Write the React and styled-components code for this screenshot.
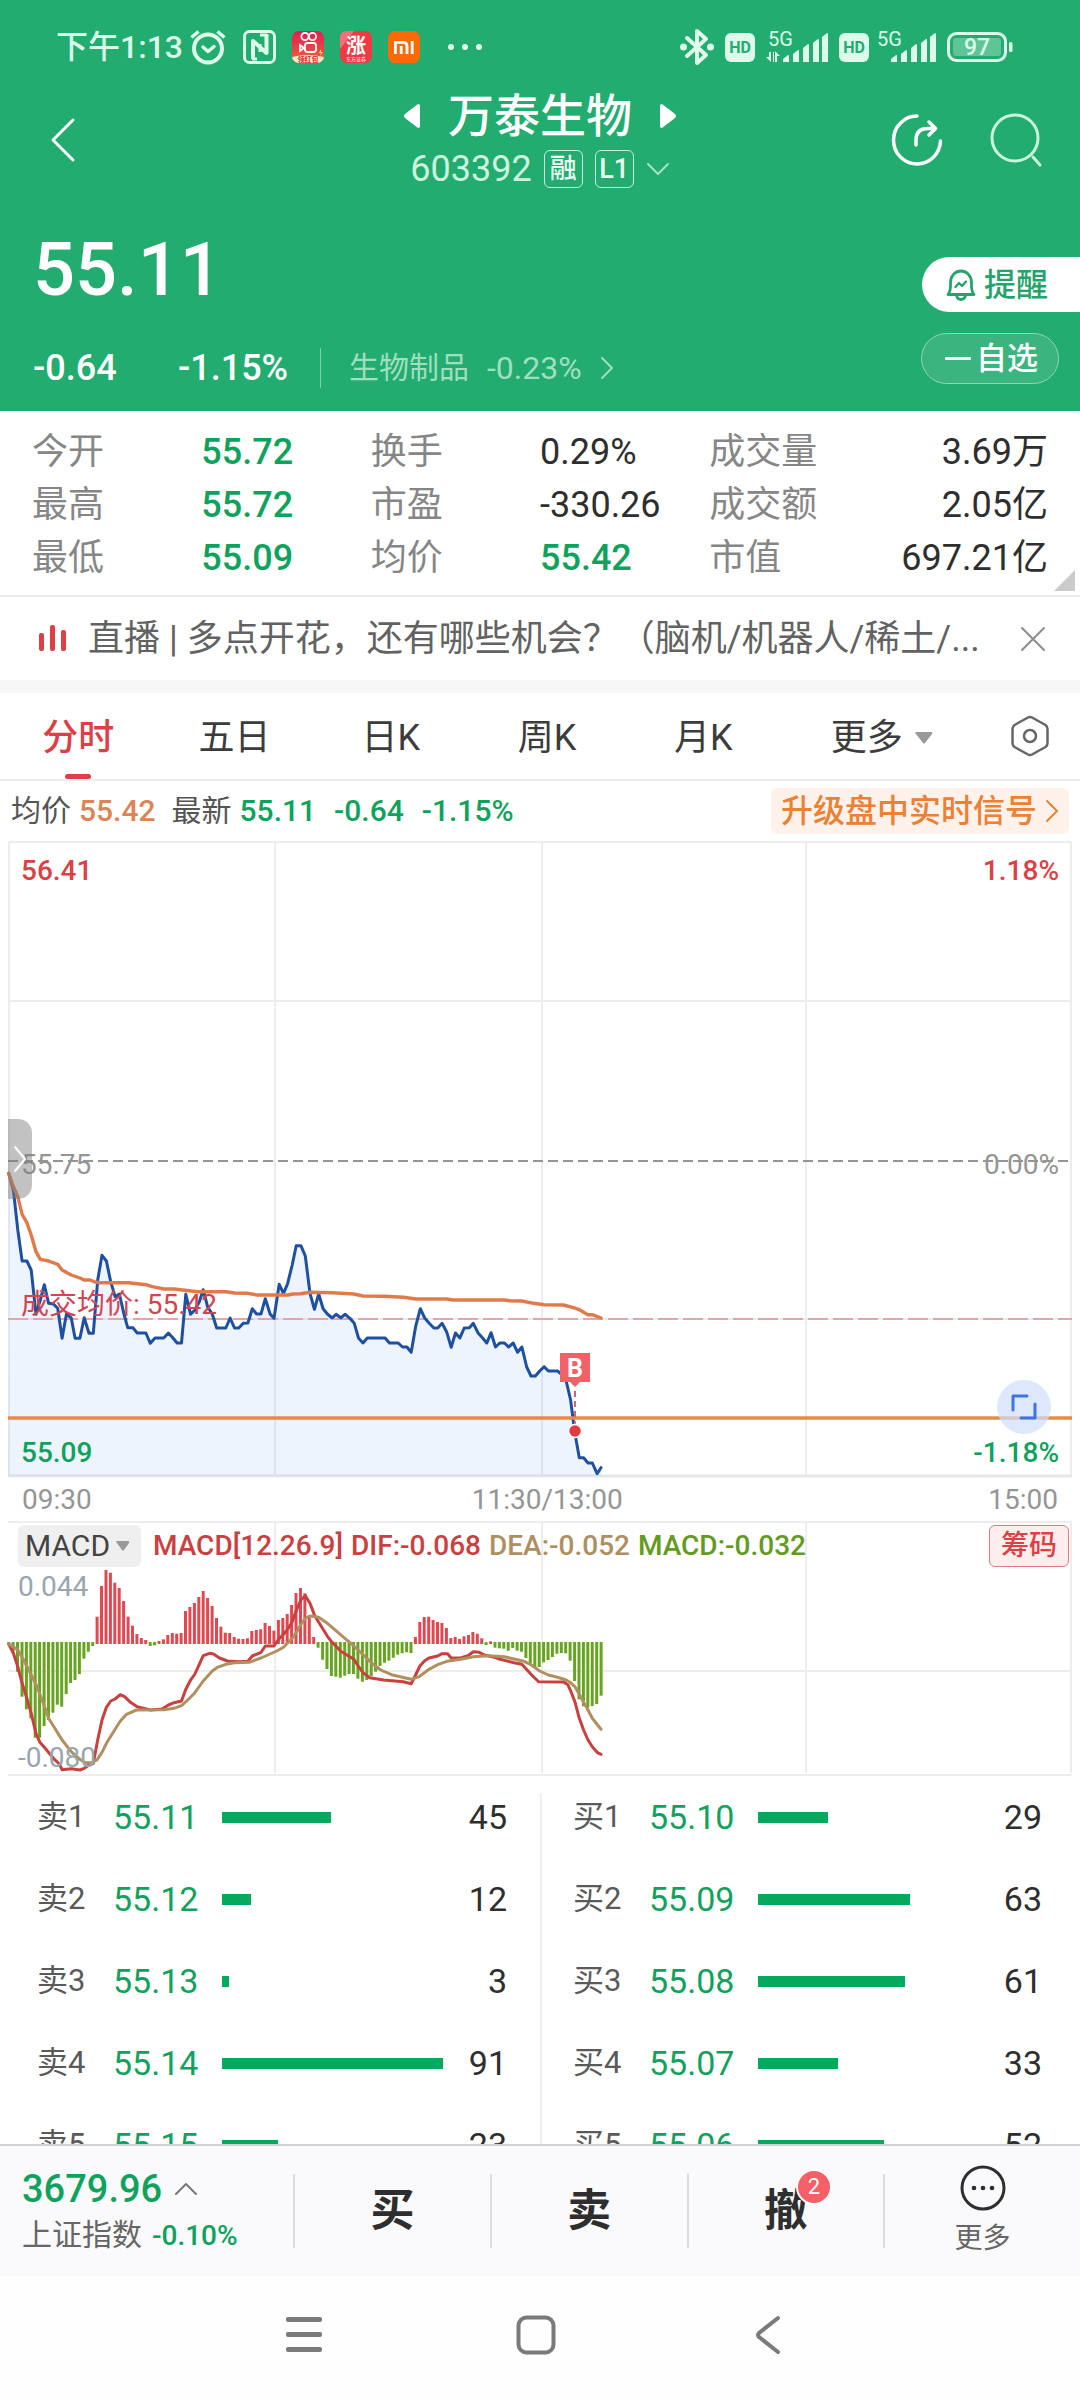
import React from "react";
import styled, { createGlobalStyle, css } from "styled-components";

const green = "#0fa25d";
const red = "#dc3f46";
const brand = "#22ac6f";

const GlobalStyle = createGlobalStyle`
  * { box-sizing: border-box; }
  body {
    margin: 0;
    background: #fff;
    color: #2e2e2e;
    font-family: Roboto, "Noto Sans CJK SC", sans-serif;
    font-size: 36px;
  }
  button, select {
    margin: 0;
    padding: 0;
    border: 0;
    background: none;
    color: inherit;
    font: inherit;
    cursor: pointer;
  }
  svg { display: block; flex: none; overflow: visible; }
`;

const Screen = styled.div`
  display: flex;
  flex-direction: column;
  height: 100vh;
`;

const Scroll = styled.main`
  flex: 1;
  min-height: 0;
  overflow-y: auto;
  scrollbar-width: none;
`;

/* ---------- header ---------- */

const Header = styled.header`
  background: ${brand};
  color: #fff;
  padding-bottom: 23px;
`;

const StatusBar = styled.div`
  display: flex;
  align-items: center;
  justify-content: space-between;
  height: 90px;
  padding: 4px 67px 0 56px;
  color: #dcfbea;
`;

const StatusGroup = styled.div`
  display: flex;
  align-items: center;
  gap: ${(p) => p.$gap}px;
`;

const Clock = styled.span`
  font-size: 32px;
  line-height: 40px;
  font-weight: 500;
`;

const TitleBar = styled.div`
  display: grid;
  grid-template-columns: 1fr auto 1fr;
  align-items: center;
  padding: 0 38px;
`;

const IconButton = styled.button`
  display: flex;
  align-items: center;
  justify-content: center;
`;

const TitleStart = styled.div`
  padding-left: 12px;
`;

const TitleCenter = styled.div`
  display: flex;
  flex-direction: column;
  align-items: center;
  gap: 7px;
`;

const TitleLine = styled.div`
  display: flex;
  align-items: center;
  gap: 28px;
`;

const StockName = styled.h1`
  margin: 0;
  font-size: 46px;
  line-height: 52px;
  font-weight: 500;
`;

const CodeLine = styled.div`
  display: flex;
  align-items: center;
  gap: 12px;
  height: 40px;
  color: #cdf3df;
  font-size: 36px;
  line-height: 40px;
`;

const CodeTag = styled.span`
  display: flex;
  align-items: center;
  justify-content: center;
  width: 39px;
  height: 38px;
  border: 1px solid #c5f0da;
  border-radius: 6px;
  color: #e9fdf3;
  font-size: 27px;
  line-height: 36px;
  font-weight: 500;
`;

const HeaderActions = styled.div`
  display: flex;
  align-items: center;
  justify-content: flex-end;
  gap: 48px;
`;

const Summary = styled.section`
  display: flex;
  justify-content: space-between;
  padding: 41px 0 0 33px;
`;

const Price = styled.div`
  font-size: 74px;
  line-height: 80px;
  font-weight: 500;
`;

const ChangeRow = styled.div`
  display: flex;
  align-items: center;
  height: 40px;
  margin-top: 38px;
  font-weight: 500;
  line-height: 40px;
`;

const Change = styled.span`
  width: ${(p) => p.$width}px;
`;

const SectorLink = styled.a`
  display: flex;
  align-items: center;
  gap: 18px;
  padding-left: 28px;
  border-left: 1px solid #7fd0a8;
  color: #9fdfc0;
  font-size: 30px;
  font-weight: 400;
  text-decoration: none;
`;

const SectorChange = styled.span`
  font-size: 32px;
`;

const SideActions = styled.div`
  display: flex;
  flex-direction: column;
  align-items: flex-end;
  gap: 21px;
  padding-top: 27px;
`;

const AlertButton = styled.button`
  display: flex;
  align-items: center;
  gap: 8px;
  height: 55px;
  padding: 0 32px 0 24px;
  border-radius: 28px 0 0 28px;
  background: #fff;
  color: #24a36b;
  font-size: 32px;
  line-height: 40px;
  font-weight: 500;
`;

const WatchButton = styled.button`
  display: flex;
  align-items: center;
  gap: 5px;
  height: 51px;
  margin-right: 21px;
  padding: 0 20px 0 23px;
  border: 1px solid #8fd6b4;
  border-radius: 26px;
  background: #3bb47f;
  font-size: 31px;
  line-height: 40px;
  font-weight: 500;
`;

/* ---------- key figures ---------- */

const StatsWrap = styled.section`
  position: relative;
  border-bottom: 2px solid #ededed;
`;

const Stats = styled.dl`
  display: grid;
  grid-template-columns: repeat(6, 1fr);
  margin: 0;
  padding: 15px 32px 10px;
  line-height: 53px;
`;

const StatLabel = styled.dt`
  color: #868686;
`;

const StatValue = styled.dd`
  margin: 0;
  color: ${(p) => (p.$down ? green : "#2e2e2e")};
  font-weight: ${(p) => (p.$down ? 500 : 400)};
  text-align: ${(p) => (p.$end ? "right" : "left")};
  white-space: nowrap;
`;

const Corner = styled.svg`
  position: absolute;
  right: 5px;
  bottom: 4px;
`;

const Notice = styled.section`
  display: flex;
  align-items: center;
  height: 83px;
  padding: 0 34px 0 39px;
  color: #626262;
`;

const NoticeText = styled.span`
  flex: 1;
  margin: 0 40px 0 22px;
  overflow: hidden;
  white-space: nowrap;
  text-overflow: ellipsis;
  line-height: 48px;
`;

/* ---------- period tabs ---------- */

const Tabs = styled.nav`
  display: flex;
  height: 101px;
  border-top: 13px solid #f7f7f7;
  border-bottom: 2px solid #ececec;
  padding-right: 31px;
`;

const Tab = styled.button`
  position: relative;
  display: flex;
  align-items: center;
  justify-content: center;
  gap: 12px;
  flex: ${(p) => (p.$wide ? 200 : 156)} 1 0;
  padding-top: 3px;
  color: ${(p) => (p.$active ? red : "#3c3c3c")};
  font-weight: ${(p) => (p.$active ? 500 : 400)};
  line-height: 48px;
  ${(p) =>
    p.$active &&
    css`
      &::after {
        content: "";
        position: absolute;
        left: calc(50% - 13px);
        bottom: 0;
        width: 26px;
        height: 5px;
        border-radius: 3px;
        background: ${red};
      }
    `}
`;

const TabTools = styled.div`
  display: flex;
  align-items: center;
  justify-content: flex-end;
  width: 67px;
`;

/* ---------- charts ---------- */

const QuoteLine = styled.div`
  display: flex;
  align-items: center;
  height: 60px;
  padding: 0 11px;
  color: #555;
  font-size: 30px;
  line-height: 44px;
  white-space: nowrap;
`;

const QuoteValue = styled.span`
  margin-left: ${(p) => (p.$spaced ? 18 : 8)}px;
  margin-right: ${(p) => (p.$last ? 16 : 0)}px;
  color: ${(p) => (p.$average ? "#dc8455" : green)};
  font-weight: 500;
`;

const Promo = styled.a`
  display: flex;
  align-items: center;
  gap: 8px;
  height: 46px;
  margin-left: auto;
  padding: 0 10px;
  border-radius: 6px;
  background: #fef2eb;
  color: #ec8033;
  font-size: 32px;
  font-weight: 500;
  text-decoration: none;
`;

const ChartBox = styled.section`
  position: relative;
  margin: 0 8px;
`;

const ChartSvg = styled.svg`
  width: 100%;
  height: auto;
`;

const ChartLabel = styled.span`
  position: absolute;
  ${(p) => p.$side || "left"}: ${(p) => (p.$tight ? 10 : 13)}px;
  ${(p) => (p.$bottom ? `bottom: ${p.$bottom};` : `top: ${p.$top};`)}
  ${(p) => p.$middle && "transform: translateY(-50%);"}
  color: ${(p) => p.$color};
  font-size: 28px;
  line-height: 32px;
  font-weight: ${(p) => (p.$strong ? 500 : 400)};
`;

const DrawerHandle = styled.button`
  position: absolute;
  left: 0;
  top: 50%;
  display: flex;
  align-items: center;
  justify-content: center;
  width: 24px;
  height: 80px;
  transform: translateY(-50%);
  border-radius: 0 14px 14px 0;
  background: rgba(120, 120, 120, 0.45);
`;

const ExpandButton = styled.button`
  position: absolute;
  right: 21px;
  top: 89%;
  display: flex;
  align-items: center;
  justify-content: center;
  width: 54px;
  height: 54px;
  transform: translateY(-50%);
  border-radius: 50%;
  background: rgba(208, 223, 252, 0.72);
`;

const TimeAxis = styled.div`
  display: grid;
  grid-template-columns: 31fr auto 30fr;
  height: 44px;
  padding: 0 14px;
  color: #959595;
  font-size: 28px;
  line-height: 46px;

  & > :last-child { text-align: right; }
`;

const IndicatorBar = styled.div`
  position: absolute;
  left: 10px;
  right: 3px;
  top: 4px;
  display: flex;
  align-items: center;
  gap: 8px;
  font-size: 28px;
  line-height: 40px;
  font-weight: 500;
  white-space: nowrap;
`;

const SelectBox = styled.label`
  position: relative;
  display: flex;
  align-items: center;
  height: 42px;
  margin-right: 4px;
  border-radius: 6px;
  background: #efefef;
  color: #444;
  font-size: 30px;
  font-weight: 400;

  select {
    width: 123px;
    padding-left: 7px;
    appearance: none;
  }

  svg {
    position: absolute;
    right: 11px;
    pointer-events: none;
  }
`;

const Legend = styled.span`
  color: ${(p) => p.$color};
`;

const ChipButton = styled.button`
  height: 42px;
  margin-left: auto;
  padding: 0 11px;
  border: 1px solid #e07a7f;
  border-radius: 6px;
  background: #fdeeee;
  color: ${red};
`;

/* ---------- order book ---------- */

const Book = styled.section`
  display: grid;
  grid-template-columns: 1fr 1fr;
`;

const Side = styled.div`
  margin-top: 17px;
  padding: 0 ${(p) => (p.$buy ? 38 : 33)}px 0 ${(p) => (p.$buy ? 31 : 37)}px;
  border-left: ${(p) => (p.$buy ? "2px solid #f0f0f0" : "0")};
`;

const BookTable = styled.table`
  width: 100%;
  table-layout: fixed;
  border-collapse: collapse;
  margin-top: -17px;
  font-size: 34px;
  line-height: 40px;
`;

const BookRow = styled.tr`
  height: 82px;
`;

const Level = styled.th`
  width: 76px;
  padding: 0;
  color: #5a5a5a;
  font-size: 31px;
  font-weight: 400;
  text-align: left;
`;

const Quote = styled.td`
  width: 109px;
  padding: 0;
  color: ${green};
`;

const Track = styled.td`
  padding: 0;
`;

const VolumeBar = styled.div`
  height: 11px;
  background: #05a95d;
`;

const Volume = styled.td`
  width: 64px;
  padding: 0;
  text-align: right;
`;

/* ---------- bottom bars ---------- */

const TradeBar = styled.footer`
  display: flex;
  align-items: center;
  height: 132px;
  border-top: 2px solid #d3d3d5;
  background: #fafafc;
`;

const IndexBox = styled.button`
  width: 293px;
  padding-left: 22px;
  text-align: left;
  color: #666;
  font-size: 30px;
  line-height: 40px;
`;

const IndexValue = styled.span`
  display: flex;
  align-items: center;
  gap: 12px;
  margin-bottom: 4px;
  color: ${green};
  font-size: 38px;
  line-height: 44px;
  font-weight: 500;
`;

const IndexChange = styled.span`
  margin-left: 10px;
  color: ${green};
  font-size: 28px;
  font-weight: 500;
`;

const TradeButton = styled.button`
  flex: 1;
  display: flex;
  flex-direction: column;
  align-items: center;
  justify-content: center;
  gap: 10px;
  height: 74px;
  border-left: 2px solid #dcdcde;
  font-size: ${(p) => (p.$small ? 28 : 44)}px;
  line-height: ${(p) => (p.$small ? 36 : 56)}px;
  font-weight: ${(p) => (p.$small ? 400 : 700)};
  color: ${(p) => (p.$small ? "#666" : "#2e2e2e")};
`;

const Badged = styled.span`
  position: relative;
`;

const Badge = styled.span`
  position: absolute;
  left: 32px;
  top: -14px;
  width: 36px;
  height: 36px;
  border: 2px solid #fff;
  border-radius: 50%;
  background: #f65f67;
  color: #fff;
  font-size: 22px;
  line-height: 32px;
  font-weight: 400;
  text-align: center;
`;

const SystemNav = styled.nav`
  display: grid;
  grid-template-columns: repeat(3, 1fr);
  height: 124px;
  padding: 0 196px 6px 188px;
  background: #fefefe;
`;

/* ---------- icons ---------- */

const stroke = { fill: "none", strokeLinecap: "round", strokeLinejoin: "round" };

const Chevron = ({ w, h, dir = "right", color = "currentColor", sw = 2 }) => {
  const d = {
    right: `M${sw} ${sw}L${w - sw} ${h / 2}L${sw} ${h - sw}`,
    left: `M${w - sw} ${sw}L${sw} ${h / 2}L${w - sw} ${h - sw}`,
    down: `M${sw} ${sw}L${w / 2} ${h - sw}L${w - sw} ${sw}`,
    up: `M${sw} ${h - sw}L${w / 2} ${sw}L${w - sw} ${h - sw}`,
  }[dir];
  return (
    <svg width={w} height={h} {...stroke} stroke={color} strokeWidth={sw}>
      <path d={d} />
    </svg>
  );
};

const Caret = ({ w, h, color = "#999" }) => (
  <svg width={w} height={h}>
    <path d={`M0 1Q0 0 2 0H${w - 2}Q${w} 0 ${w - 1} 2L${w / 2 + 1} ${h - 1}Q${w / 2} ${h} ${w / 2 - 1} ${h - 1}L1 2Z`} fill={color} />
  </svg>
);

const TitleArrow = ({ right }) => (
  <svg width="16" height="24" viewBox="0 0 16 24" fill="#fff">
    <path d={right ? "M0 2Q0 0 2 0L15 10Q17 12 15 14L2 24Q0 24 0 22Z" : "M16 2Q16 0 14 0L1 10Q-1 12 1 14L14 24Q16 24 16 22Z"} />
  </svg>
);

const AlarmIcon = () => (
  <svg width="38" height="36" viewBox="0 0 38 36" {...stroke} stroke="#dcfbea" strokeWidth="4">
    <circle cx="19" cy="19.5" r="14" />
    <path d="M14 18L19 22.500L25 17.500" strokeWidth="3.500" />
    <path d="M2.500 8.500L9.500 2.500M35.500 8.500L28.500 2.500" strokeWidth="3.500" strokeLinecap="butt" />
  </svg>
);

const NfcIcon = () => (
  <svg width="33" height="34" viewBox="0 0 33 34" fill="none" stroke="#dcfbea" strokeWidth="3" strokeLinejoin="round">
    <rect x="1.500" y="1.500" width="30" height="31" rx="5" />
    <path d="M10 29V11L23.500 23V4" strokeWidth="4" />
    <path d="M9 29H14M17 5H24" />
    <path d="M17 14V22" />
  </svg>
);

const VideoAppIcon = () => (
  <svg width="32" height="32" viewBox="0 0 32 32">
    <defs>
      <linearGradient id="videoApp" x1="0" y1="0" x2="0" y2="1">
        <stop offset="0" stopColor="#dc1f52" />
        <stop offset="1" stopColor="#f7603a" />
      </linearGradient>
      <clipPath id="videoClip"><rect width="32" height="32" rx="7" /></clipPath>
    </defs>
    <g clipPath="url(#videoClip)">
      <rect width="32" height="32" fill="url(#videoApp)" />
      <path d="M0 26Q16 22 32 26V32H0Z" fill="#fbe9c4" />
      <g fill="none" stroke="#fff" strokeWidth="1.800">
        <circle cx="13" cy="5.500" r="3.600" />
        <circle cx="20.500" cy="5.500" r="3.600" />
        <rect x="13" y="12" width="11" height="9" rx="2.500" />
        <path d="M12 17L8 14V20Z" />
      </g>
      <path d="M29 18L27 22H29L28 25L31 21H29Z" fill="#ffd84d" />
      <text x="16" y="31" fontSize="7" fontWeight="700" textAnchor="middle" fill="#d2262b">领红包</text>
    </g>
  </svg>
);

const RiseAppIcon = () => (
  <svg width="32" height="32" viewBox="0 0 32 32">
    <rect width="32" height="32" rx="7" fill="#ee3a45" />
    <path d="M0 7Q0 0 7 0H14L0 18Z" fill="#f47079" />
    <text x="16" y="22" fontSize="20" fontWeight="700" textAnchor="middle" fill="#fff">涨</text>
    <text x="16" y="30" fontSize="5" textAnchor="middle" fill="#fff">东方证券</text>
  </svg>
);

const MiIcon = () => (
  <svg width="32" height="32" viewBox="0 0 32 32">
    <rect width="32" height="32" rx="7" fill="#fb6a04" />
    <g fill="none" stroke="#fff" strokeWidth="2.800">
      <path d="M7.400 23V11.400H15Q19 11.400 19 15V23" />
      <path d="M13.200 15V23M24.200 10V23" />
    </g>
  </svg>
);

const DotsIcon = () => (
  <svg width="46" height="8" fill="#dcfbea">
    <circle cx="15" cy="4" r="3" /><circle cx="29" cy="4" r="3" /><circle cx="43" cy="4" r="3" />
  </svg>
);

const BluetoothIcon = () => (
  <svg width="34" height="38" viewBox="0 0 34 38" {...stroke} stroke="#dcfbea" strokeWidth="4">
    <path d="M7 10L26 27L17 35V3L26 11L7 28" />
    <circle cx="3.500" cy="19" r="1.500" fill="#dcfbea" /><circle cx="30.500" cy="19" r="1.500" fill="#dcfbea" />
  </svg>
);

const HdIcon = () => (
  <svg width="30" height="29" viewBox="0 0 30 29">
    <rect width="30" height="29" rx="6" fill="#dcfbea" />
    <text x="15" y="20" fontSize="16" fontWeight="700" textAnchor="middle" fill={brand}>HD</text>
  </svg>
);

const SignalIcon = ({ data }) => (
  <svg width={data ? 62 : 56} height="32" viewBox={data ? "0 0 62 32" : "6 0 56 32"} fill="#dcfbea">
    <text x={data ? 2 : 3} y="15" fontSize="20">5G</text>
    {data && <path d="M0 26L5 31V21H3V26ZM7 21V31H8V21ZM14 25L9 20V31H11V25Z" />}
    {[[17, 7], [27, 12], [37, 18], [47, 23], [56, 29]].map(([x, h]) => (
      <path key={x} d={`M${x} ${35 - h}L${x + 5} ${31 - h}Q${x + 6} ${31 - h} ${x + 6} ${32 - h}V31H${x}Z`} />
    ))}
  </svg>
);

const BatteryIcon = () => (
  <svg width="66" height="30" viewBox="0 0 66 30">
    <rect x="1.500" y="1.500" width="57" height="27" rx="8" fill="none" stroke="#dcfbea" strokeWidth="3" />
    <rect x="6" y="6" width="48" height="18" rx="3" fill="#5dc596" />
    <rect x="62" y="10" width="3.500" height="10" rx="1.500" fill="#dcfbea" />
    <text x="30" y="23" fontSize="23" fontWeight="500" textAnchor="middle" fill="#dcfbea">97</text>
  </svg>
);

const ShareIcon = () => (
  <svg width="50" height="52" viewBox="0 0 50 52" {...stroke} stroke="#fff" strokeWidth="3.500">
    <path d="M25 2A23.500 24 0 1 0 48.500 27" />
    <path d="M24 31V26Q24 14.500 36 14.500H43" />
    <path d="M37 8L43.500 14.500L37 21" />
  </svg>
);

const SearchIcon = () => (
  <svg width="52" height="56" viewBox="0 0 52 56" {...stroke} stroke="#c9f6dd" strokeWidth="3">
    <circle cx="25" cy="26" r="23" />
    <path d="M43 45L50 53" />
  </svg>
);

const BellIcon = () => (
  <svg width="30" height="32" viewBox="0 0 30 32" {...stroke} stroke="#24a36b" strokeWidth="2.800">
    <path d="M2 25.500H28C25 22 25.500 19 25.500 14C25.500 7 21 2 15 2S4.500 7 4.500 14C4.500 19 5 22 2 25.500Z" />
    <path d="M10.500 26C11 29.500 13 30.500 15 30.500S19 29.500 19.500 26" />
    <path d="M9.500 18L13 14L16 17L20 12.500" strokeWidth="2.300" />
  </svg>
);

const LiveIcon = () => (
  <svg width="27" height="27" viewBox="0 0 27 27" fill={red}>
    <rect x="0" y="8" width="5" height="18" rx="2" />
    <rect x="11" y="0" width="5" height="26" rx="2" />
    <rect x="22" y="5" width="5" height="21" rx="2" />
  </svg>
);

const CloseIcon = () => (
  <svg width="26" height="26" viewBox="0 0 26 26" {...stroke} stroke="#8c8c8c" strokeWidth="2">
    <path d="M2 2L24 24M24 2L2 24" />
  </svg>
);

const HexIcon = () => (
  <svg width="38" height="42" viewBox="0 0 38 42" {...stroke} stroke="#666" strokeWidth="2.500">
    <path d="M17 2.500Q19 1.500 21 2.500L34.500 10Q36.500 11.500 36.500 14V28Q36.500 30.500 34.500 32L21 39.500Q19 40.500 17 39.500L3.500 32Q1.500 30.500 1.500 28V14Q1.500 11.500 3.500 10Z" />
    <circle cx="19" cy="21" r="6" />
  </svg>
);

const ExpandIcon = () => (
  <svg width="26" height="26" viewBox="0 0 26 26" {...stroke} stroke="#3f74de" strokeWidth="3">
    <path d="M2 16V2H16M24 10V24H10" />
  </svg>
);

const MoreIcon = () => (
  <svg width="46" height="46" viewBox="0 0 46 46">
    <circle cx="23" cy="23" r="21" fill="none" stroke="#2e2e2e" strokeWidth="3" />
    <g fill="#2e2e2e"><circle cx="14" cy="23" r="2.300" /><circle cx="23" cy="23" r="2.300" /><circle cx="32" cy="23" r="2.300" /></g>
  </svg>
);

/* ---------- data ---------- */

const priceTrace = [
  [22,280],[34,330],[45,450],[56,543],[68,543],[79,570],[91,703],[102,660],[112,614],[123,670],[135,672],[146,685],[157,775],[168,703],[180,713],[190,775],[202,775],[213,713],[225,760],[236,760],[247,600],[258,526],[269,543],[280,605],[291,650],[302,642],[313,700],[323,743],[336,743],[347,759],[369,759],[380,790],[392,774],[414,774],[426,759],[437,773],[448,789],[459,789],[470,643],[482,703],[493,690],[504,665],[514,629],[525,680],[537,703],[548,744],[571,744],[582,714],[593,744],[604,744],[615,730],[627,729],[638,686],[649,702],[660,702],[671,656],[683,702],[693,715],[706,613],[717,640],[727,612],[739,555],[749,497],[761,497],[772,528],[784,640],[795,688],[806,642],[817,686],[828,702],[840,714],[850,703],[862,713],[873,703],[885,715],[896,730],[907,775],[918,789],[929,774],[974,774],[985,789],[1007,789],[1018,801],[1029,801],[1040,817],[1051,740],[1063,686],[1074,714],[1085,729],[1097,744],[1107,744],[1118,730],[1130,757],[1141,802],[1152,759],[1163,774],[1174,744],[1187,743],[1197,730],[1209,759],[1220,773],[1231,789],[1242,758],[1253,801],[1264,789],[1276,789],[1286,801],[1298,789],[1309,817],[1320,801],[1332,861],[1343,888],[1354,888],[1365,873],[1376,860],[1387,873],[1410,873],[1421,884],[1432,903],[1443,960],[1454,1060],[1465,1133],[1476,1133],[1487,1149],[1498,1149],[1510,1181],[1520,1163],
];

const averageTrace = [
  [22,280],[34,320],[45,350],[56,403],[68,428],[79,465],[91,515],[102,538],[123,543],[146,553],[157,570],[180,585],[202,594],[213,600],[228,600],[240,606],[252,608],[325,608],[369,614],[385,620],[415,627],[440,627],[500,635],[571,635],[593,639],[625,640],[650,645],[728,645],[740,642],[760,641],[784,637],[840,638],[895,642],[918,648],[970,649],[1020,652],[1052,657],[1130,657],[1145,660],[1276,660],[1290,662],[1320,663],[1350,670],[1376,674],[1425,675],[1450,683],[1465,689],[1487,704],[1498,704],[1520,714],
];

const macdBars = [
  430,455,515,590,628,655,713,713,678,660,638,614,620,582,549,540,522,476,455,438,
  350,258,210,218,248,264,303,350,377,402,414,420,438,436,
  423,418,405,399,401,399,333,321,309,291,273,294,318,354,380,398,399,411,416,417,415,393,390,388,369,378,392,360,354,342,315,279,264,280,346,411,
  443,479,507,528,530,533,527,522,522,536,545,540,528,515,498,488,482,473,464,460,457,459,
  411,366,351,350,360,366,369,384,414,411,417,409,405,396,401,415,435,424,
  443,445,446,452,444,452,455,474,490,504,501,487,480,471,461,459,460,482,543,598,619,623,618,612,587,
];

const difTrace = [
  [22,432],[34,460],[45,500],[56,550],[68,595],[79,640],[91,700],[101,727],[112,742],[135,775],[150,792],[157,809],[180,806],[202,810],[213,805],[225,795],[236,790],[247,720],[258,660],[269,622],[280,603],[291,597],[304,584],[315,590],[330,607],[347,620],[380,630],[410,627],[426,615],[440,608],[459,603],[470,568],[482,540],[493,522],[504,493],[514,467],[530,460],[540,462],[555,474],[575,483],[604,485],[627,484],[638,468],[660,457],[671,438],[693,438],[706,416],[717,403],[728,387],[739,365],[749,332],[761,300],[772,287],[784,310],[795,345],[806,367],[817,388],[828,409],[840,427],[862,454],[895,478],[907,500],[918,518],[935,533],[970,540],[1020,545],[1040,551],[1051,525],[1062,498],[1074,482],[1085,474],[1107,468],[1118,461],[1132,461],[1141,474],[1165,474],[1185,466],[1197,455],[1212,457],[1225,465],[1245,470],[1260,476],[1300,488],[1320,493],[1343,523],[1362,545],[1425,546],[1436,554],[1443,572],[1454,605],[1465,655],[1476,690],[1487,720],[1498,740],[1510,757],[1520,763],
];

const deaTrace = [
  [22,432],[45,450],[60,480],[79,525],[91,553],[112,618],[123,655],[135,678],[157,720],[180,755],[202,778],[215,788],[232,788],[245,780],[258,757],[269,730],[291,688],[304,664],[320,643],[345,630],[415,629],[440,625],[459,617],[475,600],[493,578],[514,543],[537,513],[548,503],[571,493],[593,488],[630,487],[660,474],[700,453],[717,442],[739,415],[749,398],[761,373],[772,355],[784,348],[806,352],[828,370],[873,416],[895,438],[918,464],[940,490],[963,510],[990,524],[1040,538],[1060,530],[1085,508],[1107,494],[1130,484],[1165,478],[1197,470],[1235,467],[1275,470],[1325,484],[1343,494],[1365,513],[1387,525],[1410,532],[1432,540],[1443,548],[1454,560],[1465,583],[1476,607],[1487,630],[1498,655],[1520,688],
];

// The traces are sampled on a grid finer than the plot: 2.529 units across and 3 units down per plot unit.
const toX = (x) => x / 2.529 - 8;
const toPoints = (trace, top) => trace.map(([x, y]) => `${toX(x).toFixed(1)},${(y / 3 + top).toFixed(1)}`).join(" ");

const stats = [
  ["今开", "55.72", true], ["换手", "0.29%"], ["成交量", "3.69万"],
  ["最高", "55.72", true], ["市盈", "-330.26"], ["成交额", "2.05亿"],
  ["最低", "55.09", true], ["均价", "55.42", true], ["市值", "697.21亿"],
];

const sells = [["卖1", "55.11", 45], ["卖2", "55.12", 12], ["卖3", "55.13", 3], ["卖4", "55.14", 91], ["卖5", "55.15", 23]];
const buys = [["买1", "55.10", 29], ["买2", "55.09", 63], ["买3", "55.08", 61], ["买4", "55.07", 33], ["买5", "55.06", 52]];
const maxVolume = 91;

/* ---------- sections ---------- */

const grid = "#ededef";

const PriceChart = () => {
  const line = toPoints(priceTrace, 239);
  return (
    <ChartSvg viewBox="0 0 1064 636" role="img" aria-label="分时走势">
      <g stroke={grid} strokeWidth="2">
        <path d="M0 1H1064M0 160H1064M0 478H1064M267 0V636M534 0V636M798 0V636M1 0V636M1063 0V636" />
        <path d="M0 635H1064" stroke="#e6e7ea" strokeWidth="3" />
      </g>
      <polygon points={`0,635 ${line} 593,635`} fill="#3f7be8" fillOpacity="0.085" />
      <path d="M0 320H1064" stroke="#959595" strokeWidth="2" strokeDasharray="10 5" />
      <path d="M0 478H1064" stroke="#e3a5aa" strokeWidth="2" strokeDasharray="20 5" />
      <polyline points={line} {...stroke} stroke="#1e50a2" strokeWidth="3" />
      <polyline points={toPoints(averageTrace, 239)} {...stroke} stroke="#e07b49" strokeWidth="3.400" />
      <path d="M0 577H1064" stroke="#e88a48" strokeWidth="3.400" />
      <path d="M567 550V584" stroke="#dd6070" strokeWidth="2" strokeDasharray="6 4" />
      <path d="M552 512H582V541H572L567 546L562 541H552Z" fill="#f2606a" />
      <text x="567" y="536" fontSize="25" fontWeight="700" textAnchor="middle" fill="#fff">B</text>
      <circle cx="567" cy="590" r="6.500" fill="#e53942" stroke="#fff" strokeWidth="1.500" />
    </ChartSvg>
  );
};

const MacdChart = () => (
  <ChartSvg viewBox="0 0 1064 255" role="img" aria-label="MACD">
    <path d="M0 1H1064M0 150H1064M0 254H1064M267 0V252M534 0V252M798 0V252M1063 0V252" stroke={grid} strokeWidth="2" />
    {macdBars.map((v, i) => {
      const x = toX(22 + i * 11.18);
      const up = v < 430;
      return (
        <path
          key={i}
          d={`M${x.toFixed(1)} ${up ? 123 : 121}V${(v / 3 - 21).toFixed(1)}`}
          stroke={up ? "#e2484f" : "#67a521"}
          strokeWidth="3"
        />
      );
    })}
    <polyline points={toPoints(difTrace, -21)} {...stroke} stroke="#c9403f" strokeWidth="3" />
    <polyline points={toPoints(deaTrace, -21)} {...stroke} stroke="#b0905f" strokeWidth="3" />
  </ChartSvg>
);

const BookSide = ({ rows, buy }) => (
  <Side $buy={buy}>
    <BookTable aria-label={buy ? "买盘" : "卖盘"}>
      <tbody>
        {rows.map(([level, quote, volume]) => (
          <BookRow key={level}>
            <Level scope="row">{level}</Level>
            <Quote>{quote}</Quote>
            <Track>
              <VolumeBar style={{ width: `${(volume / maxVolume) * 100}%` }} />
            </Track>
            <Volume>{volume}</Volume>
          </BookRow>
        ))}
      </tbody>
    </BookTable>
  </Side>
);

export default function App() {
  return (
    <Screen>
      <GlobalStyle />
      <Scroll>
        <Header>
          <StatusBar>
            <StatusGroup $gap={16}>
              <StatusGroup $gap={6}>
                <Clock>下午1:13</Clock>
                <AlarmIcon />
              </StatusGroup>
              <NfcIcon />
              <VideoAppIcon />
              <RiseAppIcon />
              <MiIcon />
              <DotsIcon />
            </StatusGroup>
            <StatusGroup $gap={11}>
              <BluetoothIcon />
              <HdIcon />
              <SignalIcon data />
              <HdIcon />
              <SignalIcon />
              <BatteryIcon />
            </StatusGroup>
          </StatusBar>

          <TitleBar>
            <TitleStart>
              <IconButton aria-label="返回"><Chevron w={26} h={46} dir="left" sw={3} /></IconButton>
            </TitleStart>
            <TitleCenter>
              <TitleLine>
                <IconButton aria-label="上一只"><TitleArrow /></IconButton>
                <StockName>万泰生物</StockName>
                <IconButton aria-label="下一只"><TitleArrow right /></IconButton>
              </TitleLine>
              <CodeLine>
                603392
                <CodeTag>融</CodeTag>
                <CodeTag>L1</CodeTag>
                <IconButton aria-label="展开"><Chevron w={24} h={14} dir="down" sw={2} color="#a5e3c4" /></IconButton>
              </CodeLine>
            </TitleCenter>
            <HeaderActions>
              <IconButton aria-label="分享"><ShareIcon /></IconButton>
              <IconButton aria-label="搜索"><SearchIcon /></IconButton>
            </HeaderActions>
          </TitleBar>

          <Summary>
            <div>
              <Price>55.11</Price>
              <ChangeRow>
                <Change $width={145}>-0.64</Change>
                <Change $width={142}>-1.15%</Change>
                <SectorLink href="#sector">
                  <span>生物制品</span>
                  <SectorChange>-0.23%</SectorChange>
                  <Chevron w={14} h={24} />
                </SectorLink>
              </ChangeRow>
            </div>
            <SideActions>
              <AlertButton><BellIcon />提醒</AlertButton>
              <WatchButton>
                <svg width="26" height="3"><rect width="26" height="3" rx="1" fill="#fff" /></svg>
                自选
              </WatchButton>
            </SideActions>
          </Summary>
        </Header>

        <StatsWrap>
          <Stats>
            {stats.map(([label, value, down], i) => (
              <React.Fragment key={label}>
                <StatLabel>{label}</StatLabel>
                <StatValue $down={down} $end={i % 3 === 2}>{value}</StatValue>
              </React.Fragment>
            ))}
          </Stats>
          <Corner width="21" height="21"><path d="M21 0V21H0Z" fill="#cbcbcb" /></Corner>
        </StatsWrap>

        <Notice>
          <LiveIcon />
          <NoticeText>直播 | 多点开花，还有哪些机会？（脑机/机器人/稀土/...</NoticeText>
          <IconButton aria-label="关闭"><CloseIcon /></IconButton>
        </Notice>

        <Tabs>
          <Tab $active>分时</Tab>
          <Tab>五日</Tab>
          <Tab>日K</Tab>
          <Tab>周K</Tab>
          <Tab>月K</Tab>
          <Tab $wide>更多<Caret w={18} h={12} /></Tab>
          <TabTools>
            <IconButton aria-label="设置"><HexIcon /></IconButton>
          </TabTools>
        </Tabs>

        <QuoteLine>
          均价<QuoteValue $average $last>55.42</QuoteValue>
          最新<QuoteValue>55.11</QuoteValue>
          <QuoteValue $spaced>-0.64</QuoteValue>
          <QuoteValue $spaced>-1.15%</QuoteValue>
          <Promo href="#signal">升级盘中实时信号<Chevron w={14} h={24} /></Promo>
        </QuoteLine>

        <ChartBox>
          <PriceChart />
          <ChartLabel $top="14px" $color={red} $strong>56.41</ChartLabel>
          <ChartLabel $top="14px" $color={red} $side="right" $strong>1.18%</ChartLabel>
          <ChartLabel $top="51%" $middle $color="#959595">55.75</ChartLabel>
          <ChartLabel $top="51%" $middle $color="#959595" $side="right">0.00%</ChartLabel>
          <ChartLabel $top="73%" $middle $color="#cf4550">成交均价: 55.42</ChartLabel>
          <ChartLabel $bottom="8px" $color={green} $strong>55.09</ChartLabel>
          <ChartLabel $bottom="8px" $color={green} $side="right" $strong>-1.18%</ChartLabel>
          <DrawerHandle aria-label="展开侧栏"><Chevron w={14} h={28} color="#fff" /></DrawerHandle>
          <ExpandButton aria-label="全屏"><ExpandIcon /></ExpandButton>
        </ChartBox>
        <ChartBox>
          <TimeAxis>
            <span>09:30</span>
            <span>11:30/13:00</span>
            <span>15:00</span>
          </TimeAxis>
        </ChartBox>

        <ChartBox>
          <MacdChart />
          <IndicatorBar>
            <SelectBox>
              <select aria-label="指标" defaultValue="MACD">
                <option>MACD</option>
              </select>
              <Caret w={14} h={10} />
            </SelectBox>
            <Legend $color="#ca3f42">MACD[12.26.9]</Legend>
            <Legend $color="#ca3f42">DIF:-0.068</Legend>
            <Legend $color="#ad8f62">DEA:-0.052</Legend>
            <Legend $color="#629b1d">MACD:-0.032</Legend>
            <ChipButton>筹码</ChipButton>
          </IndicatorBar>
          <ChartLabel $tight $top="50px" $color="#97a6af">0.044</ChartLabel>
          <ChartLabel $tight $bottom="2px" $color="#97a6af">-0.080</ChartLabel>
        </ChartBox>

        <Book>
          <BookSide rows={sells} />
          <BookSide rows={buys} buy />
        </Book>
      </Scroll>

      <TradeBar>
        <IndexBox>
          <IndexValue>3679.96<Chevron w={24} h={14} dir="up" color="#777" sw={2} /></IndexValue>
          上证指数<IndexChange>-0.10%</IndexChange>
        </IndexBox>
        <TradeButton>买</TradeButton>
        <TradeButton>卖</TradeButton>
        <TradeButton><Badged>撤<Badge>2</Badge></Badged></TradeButton>
        <TradeButton $small><MoreIcon />更多</TradeButton>
      </TradeBar>

      <SystemNav>
        <IconButton aria-label="菜单">
          <svg width="36" height="36" fill="#7a7a7a">
            <rect y="0" width="36" height="5" rx="2" /><rect y="15" width="36" height="5" rx="2" /><rect y="30" width="36" height="5" rx="2" />
          </svg>
        </IconButton>
        <IconButton aria-label="主页">
          <svg width="40" height="40"><rect x="2.500" y="2.500" width="35" height="35" rx="8" fill="none" stroke="#7a7a7a" strokeWidth="4" /></svg>
        </IconButton>
        <IconButton aria-label="返回上级">
          <svg width="26" height="40" {...stroke} stroke="#7a7a7a" strokeWidth="4"><path d="M23 3L4 18Q2 20 4 22L23 37" /></svg>
        </IconButton>
      </SystemNav>
    </Screen>
  );
}
